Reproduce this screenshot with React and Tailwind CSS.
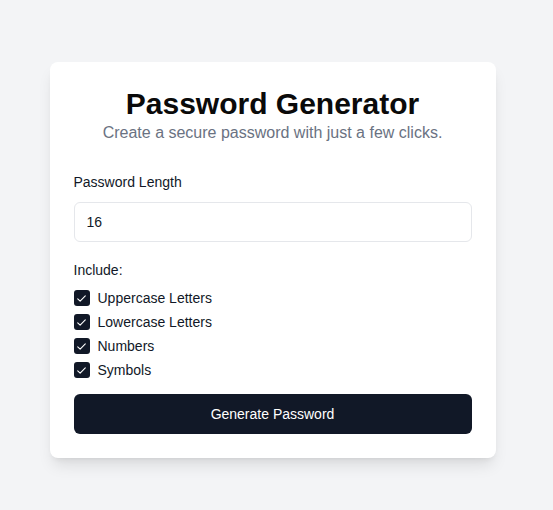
import { useState } from "react";

const options = [
  { key: "upper", label: "Uppercase Letters" },
  { key: "lower", label: "Lowercase Letters" },
  { key: "numbers", label: "Numbers" },
  { key: "symbols", label: "Symbols" },
];

const CheckBox = ({ checked, onChange, label }) => (
  <label className="flex items-center gap-2 h-5 cursor-pointer">
    <span
      onClick={onChange}
      className={`w-4 h-4 rounded-[3px] flex items-center justify-center ${checked ? "bg-[#111827]" : "border border-gray-400 bg-white"}`}
    >
      {checked && (
        <svg width="13" height="13" viewBox="0 0 24 24" fill="none" stroke="white" strokeWidth="2" strokeLinecap="round" strokeLinejoin="round">
          <path d="M5 12.5l4.5 4.5L19 7" />
        </svg>
      )}
    </span>
    <span className="text-sm text-[#111827]">{label}</span>
  </label>
);

export default function App() {
  const [length, setLength] = useState("16");
  const [checks, setChecks] = useState({ upper: true, lower: true, numbers: true, symbols: true });

  return (
    <div className="min-h-screen bg-[#f3f4f6] flex justify-center pt-[62px] pr-2" style={{ fontFamily: '"Liberation Sans", Arial, sans-serif' }}>
      <div className="w-[446px] h-[396px] bg-white rounded-lg shadow-lg p-6 flex flex-col">
        <h1 className="text-3xl font-bold text-center text-[#0a0a0a] leading-9">Password Generator</h1>
        <p className="text-center text-gray-500 -mt-px">Create a secure password with just a few clicks.</p>

        <label className="block text-sm text-[#111827] mt-[27px]">Password Length</label>
        <input
          type="number"
          value={length}
          onChange={(e) => setLength(e.target.value)}
          className="mt-2.5 h-10 w-full rounded-md border border-gray-200 px-3 text-sm text-[#111827] outline-none"
        />

        <div className="text-sm text-[#111827] mt-[18px]">Include:</div>
        <div className="flex flex-col gap-1 mt-2">
          {options.map((o) => (
            <CheckBox
              key={o.key}
              label={o.label}
              checked={checks[o.key]}
              onChange={() => setChecks((p) => ({ ...p, [o.key]: !p[o.key] }))}
            />
          ))}
        </div>

        <button className="mt-3.5 h-10 w-full rounded-md bg-[#111827] text-white text-sm">
          Generate Password
        </button>
      </div>
    </div>
  );
}
